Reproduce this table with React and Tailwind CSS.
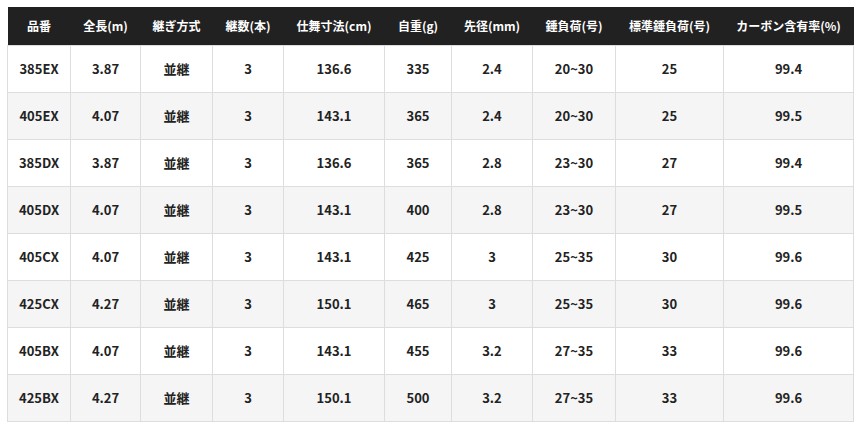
const headers = [
  '品番',
  '全長(m)',
  '継ぎ方式',
  '継数(本)',
  '仕舞寸法(cm)',
  '自重(g)',
  '先径(mm)',
  '錘負荷(号)',
  '標準錘負荷(号)',
  'カーボン含有率(%)',
]

const widths = [63, 70, 72, 71, 101, 67, 81, 83, 108, 130]

const rows = [
  ['385EX', '3.87', '並継', '3', '136.6', '335', '2.4', '20~30', '25', '99.4'],
  ['405EX', '4.07', '並継', '3', '143.1', '365', '2.4', '20~30', '25', '99.5'],
  ['385DX', '3.87', '並継', '3', '136.6', '365', '2.8', '23~30', '27', '99.4'],
  ['405DX', '4.07', '並継', '3', '143.1', '400', '2.8', '23~30', '27', '99.5'],
  ['405CX', '4.07', '並継', '3', '143.1', '425', '3', '25~35', '30', '99.6'],
  ['425CX', '4.27', '並継', '3', '150.1', '465', '3', '25~35', '30', '99.6'],
  ['405BX', '4.07', '並継', '3', '143.1', '455', '3.2', '27~35', '33', '99.6'],
  ['425BX', '4.27', '並継', '3', '150.1', '500', '3.2', '27~35', '33', '99.6'],
]

export default function App() {
  return (
    <div className="bg-white w-[855px] h-[431px] pt-[7px] pl-[7px] font-['Noto_Sans_CJK_JP','Noto_Sans',sans-serif]">
      <table className="table-fixed border-collapse w-[846px] text-[13px] font-bold text-center">
        <colgroup>
          {widths.map((w, i) => (
            <col key={i} style={{ width: w }} />
          ))}
        </colgroup>
        <thead>
          <tr className="bg-[#212121] text-white h-[38px] text-[12px]">
            {headers.map((h) => (
              <th key={h} className="p-0 font-bold whitespace-nowrap">{h}</th>
            ))}
          </tr>
        </thead>
        <tbody>
          {rows.map((r, i) => (
            <tr key={i} className={i % 2 ? 'bg-[#f5f5f5] h-[47px]' : 'bg-white h-[47px]'}>
              {r.map((c, j) => (
                <td key={j} className="p-0 border border-[#dddddd] text-[#222222]">{c}</td>
              ))}
            </tr>
          ))}
        </tbody>
      </table>
    </div>
  )
}
